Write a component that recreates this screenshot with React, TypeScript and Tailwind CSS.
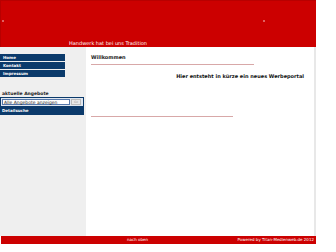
import React from 'react';

export default function App() {
  const nav = ['Home', 'Kontakt', 'Impressum'];

  return (
    <div className="w-[316px] bg-white" style={{ fontFamily: '"DejaVu Sans", Verdana, sans-serif' }}>
      <div className="relative h-[47px] bg-[#cc0000] border-l border-t border-[#b80000]">
        <span className="absolute left-[1px] top-[19px] w-[2px] h-[2px] bg-[#e06060]" />
        <span className="absolute left-[262px] top-[19px] w-[2px] h-[2px] bg-[#e06060]" />
        <div className="absolute left-[68px] top-[39px] text-[5px] leading-[6px] text-white">
          Handwerk hat bei uns Tradition
        </div>
      </div>

      <div className="flex h-[189px]">
        <div className="w-[86px] bg-[#efefef] pt-[7px]">
          <ul className="w-[65px] flex flex-col gap-[1px]">
            {nav.map((item) => (
              <li
                key={item}
                className="h-[7px] bg-[#0b3a6b] pl-[3px] text-[4px] leading-[7px] font-bold text-white"
              >
                {item}
              </li>
            ))}
          </ul>

          <div className="mt-[14px] pl-[2px] text-[4.5px] leading-[6px] font-bold text-[#222]">aktuelle Angebote</div>
          <div className="w-[84px] bg-[#dfe6ef] border border-[#0b3a6b] flex items-center gap-[1px] px-[1px] py-[1px]">
            <div className="w-[68px] h-[6px] bg-white border border-[#5577aa] text-[4.5px] leading-[5px] pl-[1px] text-[#222]">
              Alle Angebote anzeigen
            </div>
            <div className="w-[10px] h-[6px] bg-[#e8e8e8] border border-[#bbb] text-[3px] leading-[5px] text-center text-[#999]">
              Go
            </div>
          </div>
          <div className="w-[84px] h-[8px] bg-[#0b3a6b] pl-[2px] text-[4px] leading-[8px] font-bold text-white">Detailsuche</div>
        </div>

        <div className="flex-1 bg-white border-r-2 border-[#e8e8e8] pl-[5px] pr-[10px] pt-[7px]">
          <div className="text-[5px] leading-[6px] font-bold text-[#222]">Willkommen</div>
          <div className="mt-[4px] w-[163px] h-[1px] bg-[#d8a8a8]" />
          <div className="mt-[8px] text-right text-[5px] leading-[6px] font-bold text-[#111]">
            Hier entsteht in kürze ein neues Werbeportal
          </div>
          <div className="mt-[37px] w-[142px] h-[1px] bg-[#d8a8a8]" />
        </div>
      </div>

      <div className="ml-[1px] h-[8px] bg-[#cc0000] flex items-center text-[4px] text-white">
        <span className="ml-[126px]">nach oben</span>
        <span className="ml-auto mr-[2px]">Powered by Titan-Medienweb.de 2012</span>
      </div>
    </div>
  );
}
